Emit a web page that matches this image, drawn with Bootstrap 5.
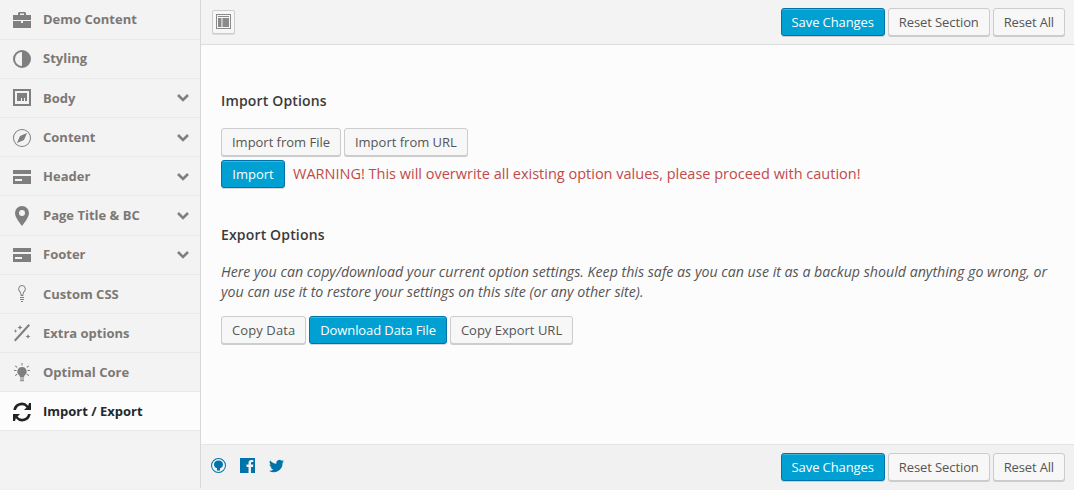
<!DOCTYPE html>
<html lang="en"><head><meta charset="utf-8"><title>Options</title>
<link href="https://cdn.jsdelivr.net/npm/bootstrap@5.3.0/dist/css/bootstrap.min.css" rel="stylesheet">
<style>
html,body{height:490px;overflow:hidden}
body{font-family:"Open Sans",sans-serif;font-size:13px;background:#f1f1f1;color:#444}
.shell{height:488px}
.side{width:200px;flex:none;background:#f3f3f3;border-right:1px solid #d8d8d8;box-sizing:content-box;padding-top:.4px}
.side-item{height:39.2px;padding:1px 11px 0 12px;border-bottom:1px solid #e9e9e9;color:#7d7874;font-weight:700;font-size:13px}
.side-item.on{background:#fcfcfc;color:#23282d}
.side-ico{width:20px;height:20px;margin-right:11px;flex:none;fill:#7f7f7f}
.on .side-ico{fill:#222}
.side-arrow{width:12px;height:8px;fill:none;stroke:#7f7f7f;stroke-width:2.6}
.main{background:#fcfcfc;min-width:0}
.bar{background:#f3f3f3;padding:0 9px 0 11px}
.bar-top{height:45px;border-bottom:1px solid #dedede;padding-bottom:1px}
.bar-bot{height:44px;border-top:1px solid #e5e5e5;background:#f1f1f1;padding-left:10px}
.btn-row{gap:3px}
.wp-btn{font-size:13px;line-height:26px;height:28px;padding:0 10px;border-radius:3px;border:1px solid #ccc;background:#f7f7f7;color:#555;box-shadow:0 1px 0 #ccc;white-space:nowrap}
.wp-btn:hover{background:#f7f7f7;color:#555;border-color:#ccc}
.wp-pri,.wp-pri:hover{background:#00a0d2;border-color:#0073aa;color:#fff;box-shadow:inset 0 1px 0 rgba(120,200,230,.5),0 1px 0 rgba(0,0,0,.15)}
.tight{letter-spacing:-.15px}
.tight2{letter-spacing:-.1px}
.tight3{letter-spacing:-.02px}
.wide{letter-spacing:.1px}
.import-btn{min-width:64px}
.lay-btn{width:23px;height:24px;border:1px solid #ccc;border-radius:2px;background:#f7f7f7;box-shadow:0 1px 0 #ddd;padding:3px}
.body-pane{padding:46px 20px 0}
.sec-title{font-size:14px;font-weight:600;color:#3a3a3a;line-height:20px;margin:0;letter-spacing:.16px}
.import-first{margin-top:17px}
.import-row{margin-top:4px}
.warn{color:#c24a4a;font-size:14.5px;margin-left:8px}
.export-title{margin-top:37px;margin-bottom:17px}
.desc{font-size:14.2px;font-style:italic;line-height:20px;color:#555;margin:0}
.export-row{margin-top:14px}
.soc-row{gap:14px;margin-bottom:3px}
.soc{width:15px;height:15px;fill:#0073aa}
</style></head><body>
<div class="shell d-flex">
<nav class="side">
<div class="side-item d-flex align-items-center"><svg class="side-ico" viewBox="0 0 20 20"><path d="M7 2h6l1 1v2h5v5H1V5h5V3zM8 3.500V5h4V3.500zM1 11h8v2h2v-2h8v7H1z"/></svg>Demo Content</div>
<div class="side-item d-flex align-items-center"><svg class="side-ico" viewBox="0 0 20 20"><path fill-rule="evenodd" d="M10 1a9 9 0 1 1 0 18 9 9 0 0 1 0-18zM10 3a7 7 0 0 0 0 14z"/></svg>Styling</div>
<div class="side-item d-flex align-items-center"><svg class="side-ico" viewBox="0 0 20 20"><path fill-rule="evenodd" d="M1 1h18v17H1zM3 3v13h14V3zM5 5h10v8h-2v-3h-1v3h-2v-3H9v3H5z"/></svg><span class="flex-grow-1">Body</span><svg class="side-arrow" viewBox="0 0 12 8"><path d="M1 1l5 5 5-5"/></svg></div>
<div class="side-item d-flex align-items-center"><svg class="side-ico" viewBox="0 0 20 20"><path fill-rule="evenodd" d="M10 1a9 9 0 1 1 0 18 9 9 0 0 1 0-18zM10 2a8 8 0 1 0 0 16 8 8 0 0 0 0-16zM15 5l-3 7-7 3 3-7z"/></svg><span class="flex-grow-1">Content</span><svg class="side-arrow" viewBox="0 0 12 8"><path d="M1 1l5 5 5-5"/></svg></div>
<div class="side-item d-flex align-items-center"><svg class="side-ico" viewBox="0 0 20 20"><path fill-rule="evenodd" d="M1 3h18v4H1zM1 9h18v8H1zM3 12v2h7v-2z"/></svg><span class="flex-grow-1">Header</span><svg class="side-arrow" viewBox="0 0 12 8"><path d="M1 1l5 5 5-5"/></svg></div>
<div class="side-item d-flex align-items-center"><svg class="side-ico" viewBox="0 0 20 20"><path fill-rule="evenodd" d="M10 0a7 7 0 0 1 7 7c0 4-4 9-7 13-3-4-7-9-7-13a7 7 0 0 1 7-7zm0 4a3 3 0 1 0 0 6 3 3 0 0 0 0-6z"/></svg><span class="flex-grow-1">Page Title &amp; BC</span><svg class="side-arrow" viewBox="0 0 12 8"><path d="M1 1l5 5 5-5"/></svg></div>
<div class="side-item d-flex align-items-center"><svg class="side-ico" viewBox="0 0 20 20"><path fill-rule="evenodd" d="M1 3h18v4H1zM1 9h18v8H1zM3 12v2h7v-2z"/></svg><span class="flex-grow-1">Footer</span><svg class="side-arrow" viewBox="0 0 12 8"><path d="M1 1l5 5 5-5"/></svg></div>
<div class="side-item d-flex align-items-center"><svg class="side-ico" viewBox="0 0 20 20"><path fill-rule="evenodd" d="M10 1a4 4 0 0 1 2.500 7c-.8.800-1 2-1.200 4H8.700c-.2-2-.4-3.200-1.200-4A4 4 0 0 1 10 1zm0 1a3 3 0 0 0-1.800 5.300c.9 1 1.200 2.200 1.400 3.700h.8c.2-1.500.5-2.700 1.400-3.700A3 3 0 0 0 10 2zM8 13h4v1H8zm0 2h4v1H8zm1 2h2v1H9z"/></svg>Custom CSS</div>
<div class="side-item d-flex align-items-center"><svg class="side-ico" viewBox="0 0 20 20"><path d="M16.500 1l1.500 1.500L3.500 18.500 2 17zM8 2l.8 1.700 1.700.8-1.700.8L8 7l-.8-1.700-1.700-.8 1.700-.8zM16 11l.7 1.800 1.800.7-1.800.7-.7 1.800-.7-1.800-1.800-.7 1.800-.7zM3.500 6l.5 1.500 1.500.5L4 8.500 3.500 10 3 8.500 1.500 8 3 7.500z"/></svg>Extra options</div>
<div class="side-item d-flex align-items-center"><svg class="side-ico" viewBox="0 0 20 20"><path d="M10 4a4.500 4.500 0 0 1 3 8c-.7.700-1 1.500-1 2.500H8c0-1-.3-1.800-1-2.500a4.500 4.500 0 0 1 3-8zM8 15.500h4v1H8zm0 1.800h4v1H8zM9.500 0h1v2.500h-1zM2 7h2.500v1H2zm13.500 0H18v1h-2.500zM3.500 2.500l2 1.500-.6.800-2-1.500zm13 0 .6.800-2 1.500-.6-.8zM4.900 10.700l.6.800-2 1.500-.6-.8zm10.200 0 2 1.500-.6.800-2-1.500z"/></svg>Optimal Core</div>
<div class="side-item on d-flex align-items-center"><svg class="side-ico" viewBox="0 0 20 20"><path d="M17 1h2v7h-7l2.500-2.500A6 6 0 0 0 4 8H1.300A8.500 8.500 0 0 1 16.200 3.700zM3 19H1v-7h7l-2.500 2.500A6 6 0 0 0 16 12h2.700A8.500 8.500 0 0 1 3.800 16.300z"/></svg>Import / Export</div>
</nav>
<div class="main flex-grow-1 d-flex flex-column">
<div class="bar bar-top d-flex align-items-center">
<div class="lay-btn me-auto d-flex"><svg viewBox="0 0 15 15" width="15" height="15"><path fill="#8a8a8a" fill-rule="evenodd" d="M0 0h15v15H0zM1 1v13h13V1zM2 2h11v1H2zm0 2h3.500v9H2zm4.500 0H13v9H6.500z"/></svg></div>
<div class="d-flex btn-row"><button class="btn wp-btn wp-pri tight2">Save Changes</button><button class="btn wp-btn tight2">Reset Section</button><button class="btn wp-btn tight">Reset All</button></div>
</div>
<div class="body-pane flex-grow-1">
<h3 class="sec-title">Import Options</h3>
<div class="d-flex btn-row import-first"><button class="btn wp-btn tight3">Import from File</button><button class="btn wp-btn">Import from URL</button></div>
<div class="d-flex align-items-center import-row"><button class="btn wp-btn wp-pri import-btn">Import</button><span class="warn">WARNING! This will overwrite all existing option values, please proceed with caution!</span></div>
<h3 class="sec-title export-title">Export Options</h3>
<p class="desc">Here you can copy/download your current option settings. Keep this safe as you can use it as a backup should anything go wrong, or you can use it to restore your settings on this site (or any other site).</p>
<div class="d-flex btn-row export-row"><button class="btn wp-btn wide">Copy Data</button><button class="btn wp-btn wp-pri tight2">Download Data File</button><button class="btn wp-btn">Copy Export URL</button></div>
</div>
<div class="bar bar-bot d-flex align-items-center">
<div class="d-flex align-items-center soc-row me-auto">
<svg class="soc" viewBox="0 0 15 15"><path fill-rule="evenodd" d="M7.500 0a7.500 7.500 0 1 1 0 15 7.500 7.500 0 0 1 0-15zm0 1a6.500 6.500 0 1 0 0 13 6.500 6.500 0 0 0 0-13zm0 1.500c2.500 0 4.500 1.500 4.500 4 0 2-1.300 3.300-3 3.800v2.200H6v-2.200C4.300 9.800 3 8.500 3 6.500c0-2.500 2-4 4.500-4z"/></svg>
<svg class="soc" viewBox="0 0 15 15"><path fill-rule="evenodd" d="M0 0h15v15h-4V9h2l.3-2.400H11V5.200c0-.7.200-1.100 1.100-1.100h1.200V2c-.9-.1-1.400-.1-2-.1-1.700 0-2.800 1-2.800 3v1.700h-2V9h2v6H0z"/></svg>
<svg class="soc" viewBox="0 0 16 15"><path d="M16 3c-.6.300-1.200.4-1.900.5.700-.4 1.200-1 1.400-1.800-.6.400-1.300.6-2 .8A3.300 3.300 0 0 0 7.900 5.500C5.200 5.400 2.800 4.100 1.100 2.100c-.9 1.500-.4 3.400 1 4.400-.5 0-1-.2-1.500-.4 0 1.600 1.100 2.900 2.600 3.200-.5.100-1 .2-1.500.1.400 1.300 1.600 2.200 3 2.300A6.600 6.600 0 0 1 0 13a9.300 9.300 0 0 0 14.400-8.300c.6-.5 1.200-1 1.600-1.700z"/></svg>
</div>
<div class="d-flex btn-row"><button class="btn wp-btn wp-pri tight2">Save Changes</button><button class="btn wp-btn tight2">Reset Section</button><button class="btn wp-btn tight">Reset All</button></div>
</div>
</div>
</div>
<script src="https://cdn.jsdelivr.net/npm/bootstrap@5.3.0/dist/js/bootstrap.bundle.min.js"></script>
</body></html>
